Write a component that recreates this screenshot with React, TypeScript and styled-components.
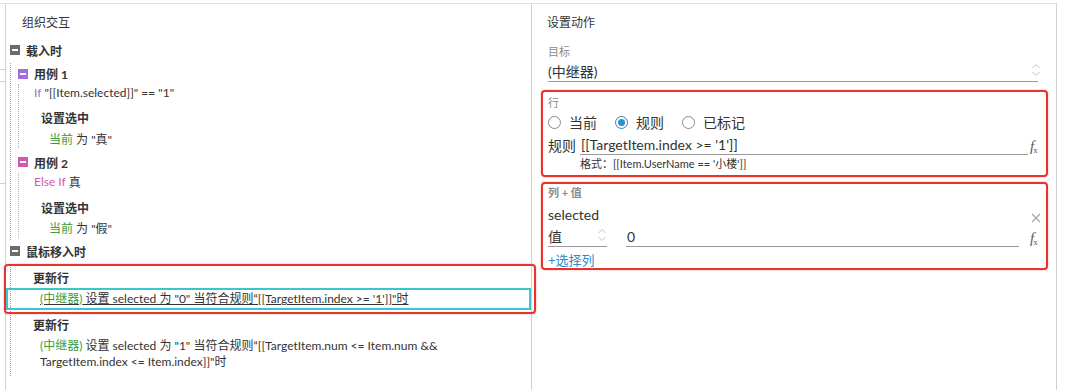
import React from "react";
import styled, { createGlobalStyle } from "styled-components";

const GlobalStyle = createGlobalStyle`
  html, body {
    margin: 0;
    padding: 0;
    background: #ffffff;
  }
  body {
    font-family: "Lato", "Noto Sans CJK SC", sans-serif;
    color: #333333;
    font-size: 12px;
  }
`;

const Page = styled.div`
  position: relative;
  width: 1066px;
  height: 390px;
  padding-top: 3px;
  box-sizing: border-box;
  overflow: hidden;
`;

const Frame = styled.div`
  display: flex;
  width: 1057px;
  height: 387px;
  border-top: 1px solid #e0e0e0;
  border-right: 1px solid #d2d2d2;
  box-sizing: border-box;
`;

const Gutter = styled.div`
  width: 5px;
  display: flex;
  flex-direction: column;
`;

const Tick = styled.div<{ $mt: number }>`
  height: 1px;
  background: #d0d0d0;
  margin-top: ${(p) => p.$mt}px;
`;

const Panel = styled.div<{ $width?: number }>`
  ${(p) => (p.$width ? `width: ${p.$width}px;` : "flex: 1;")}
  border-left: 1px solid #d2d2d2;
  display: flex;
  flex-direction: column;
  box-sizing: border-box;
`;

const PanelTitle = styled.div<{ $pl: number }>`
  height: 36px;
  line-height: 37px;
  padding-left: ${(p) => p.$pl}px;
  font-size: 12px;
  color: #333;
`;

/* ---------- left tree ---------- */

const EventGroup = styled.div<{ $mt?: number }>`
  margin-left: 4px;
  margin-top: ${(p) => p.$mt ?? 0}px;
`;

const NodeHeader = styled.div<{ $h: number; $mt?: number }>`
  display: flex;
  align-items: center;
  gap: 6px;
  height: ${(p) => p.$h}px;
  margin-top: ${(p) => p.$mt ?? 0}px;
  font-weight: 700;
  font-size: 12px;
  color: #333;
`;

const MinusBox = styled.span<{ $color: string }>`
  width: 10px;
  height: 10px;
  background: ${(p) => p.$color};
  display: inline-flex;
  align-items: center;
  justify-content: center;
  &::after {
    content: "";
    width: 6px;
    height: 2px;
    background: #ffffff;
  }
`;

const Branch = styled.div<{ $color: string; $pl: number; $pb?: number }>`
  border-left: 1px dotted ${(p) => p.$color};
  padding-left: ${(p) => p.$pl}px;
  padding-bottom: ${(p) => p.$pb ?? 0}px;
`;

const Line = styled.div<{ $h: number; $mt?: number; $indent?: number; $bold?: boolean }>`
  display: flex;
  align-items: center;
  height: ${(p) => p.$h}px;
  margin-top: ${(p) => p.$mt ?? 0}px;
  padding-left: ${(p) => p.$indent ?? 0}px;
  font-weight: ${(p) => (p.$bold ? 700 : 400)};
  white-space: pre;
`;

const Keyword = styled.span<{ $color: string }>`
  color: ${(p) => p.$color};
`;

const ActionRow = styled.div<{ $selected?: boolean; $mt?: number }>`
  margin-top: ${(p) => p.$mt ?? 0}px;
  margin-left: ${(p) => (p.$selected ? -5 : 0)}px;
  padding-left: ${(p) => (p.$selected ? 32 : 29)}px;
  border: ${(p) => (p.$selected ? "2px solid #3cc6c8" : "none")};
  height: ${(p) => (p.$selected ? "22px" : "auto")};
  box-sizing: border-box;
  display: flex;
  align-items: center;
  line-height: 16px;
  text-decoration: ${(p) => (p.$selected ? "underline" : "none")};
  white-space: nowrap;
`;

const ActionText = styled.div`
  line-height: 16px;
`;

const Highlight = styled.div`
  position: absolute;
  left: 4px;
  top: 264px;
  width: 532px;
  height: 50px;
  border: 2px solid #e8332c;
  border-radius: 4px;
  box-sizing: border-box;
  box-shadow: 0 0 2px rgba(232, 51, 44, 0.45);
  pointer-events: none;
`;

/* ---------- right form ---------- */

const Form = styled.div`
  padding: 0 15px 0 16px;
  display: flex;
  flex-direction: column;
`;

const SmallLabel = styled.div<{ $h: number; $mt?: number; $bold?: boolean }>`
  height: ${(p) => p.$h}px;
  margin-top: ${(p) => p.$mt ?? 0}px;
  display: flex;
  align-items: center;
  font-size: 11px;
  color: #8a8a8a;
  font-weight: ${(p) => (p.$bold ? 700 : 400)};
`;

const SelectField = styled.div<{ $width?: number; $mt?: number; $size?: number }>`
  display: flex;
  align-items: center;
  justify-content: space-between;
  height: 20px;
  margin-top: ${(p) => p.$mt ?? 0}px;
  ${(p) => (p.$width ? `width: ${p.$width}px;` : "")}
  border-bottom: 1px solid #9a9a9a;
  font-size: ${(p) => p.$size ?? 14}px;
  color: #333;
`;

const Section = styled.div<{ $mt: number }>`
  margin: ${(p) => p.$mt}px -7px 0 -7px;
  border: 2px solid #e8332c;
  border-radius: 4px;
  box-shadow: 0 0 2px rgba(232, 51, 44, 0.45);
  padding: 0 5px 0 5px;
  display: flex;
  flex-direction: column;
`;

const RadioRow = styled.div`
  display: flex;
  align-items: center;
  gap: 18px;
  height: 20px;
  margin-top: 1px;
`;

const RadioItem = styled.label`
  display: inline-flex;
  align-items: center;
  gap: 8px;
  font-size: 14px;
  color: #333;
`;

const RadioDot = styled.span<{ $checked?: boolean }>`
  width: 13px;
  height: 13px;
  border-radius: 50%;
  box-sizing: border-box;
  border: 1px solid ${(p) => (p.$checked ? "#2b86b8" : "#8a8a8a")};
  background: #fff;
  display: inline-flex;
  align-items: center;
  justify-content: center;
  &::after {
    content: "";
    width: 7px;
    height: 7px;
    border-radius: 50%;
    background: ${(p) => (p.$checked ? "#2595d2" : "transparent")};
  }
`;

const FieldRow = styled.div<{ $mt?: number; $h?: number }>`
  display: flex;
  align-items: center;
  height: ${(p) => p.$h ?? 20}px;
  margin-top: ${(p) => p.$mt ?? 0}px;
  font-size: 14px;
  color: #333;
`;

const FieldLabel = styled.span<{ $width: number }>`
  width: ${(p) => p.$width}px;
  flex: none;
`;

const TextInput = styled.div<{ $ml?: number }>`
  flex: 1;
  height: 20px;
  margin-left: ${(p) => p.$ml ?? 0}px;
  display: flex;
  align-items: center;
  padding-left: 1px;
  border-bottom: 1px solid #9a9a9a;
  font-size: 14px;
  color: #333;
  align-self: flex-start;
`;

const Fx = styled.span<{ $ml: number }>`
  margin-left: ${(p) => p.$ml}px;
  width: 11px;
  flex: none;
  font-family: "Liberation Serif", serif;
  font-style: italic;
  color: #5a5a5a;
  font-size: 15px;
  line-height: 1;
  margin-top: 5px;
  white-space: nowrap;
  sub {
    font-size: 9px;
    font-style: normal;
    vertical-align: -2px;
    margin-left: -1px;
  }
`;

const Hint = styled.div`
  height: 16px;
  padding-left: 32px;
  display: flex;
  align-items: center;
  font-size: 11px;
  color: #333;
`;

const SpreadRow = styled.div<{ $mt?: number }>`
  display: flex;
  justify-content: space-between;
  align-items: center;
  height: 20px;
  margin-top: ${(p) => p.$mt ?? 0}px;
  font-size: 14px;
  color: #333;
`;

const AddLink = styled.div`
  height: 17px;
  margin-top: 4px;
  display: flex;
  align-items: center;
  font-size: 13px;
  color: #2a8bcf;
`;

const Chevrons = ({ style }: { style?: React.CSSProperties }) => (
  <svg width="10" height="16" viewBox="0 0 10 16" style={style}>
    <polyline points="1.5,6 5,2.5 8.5,6" fill="none" stroke="#c4c4c4" strokeWidth="1" />
    <polyline points="1.5,10 5,13.5 8.5,10" fill="none" stroke="#c4c4c4" strokeWidth="1" />
  </svg>
);

const CloseIcon = () => (
  <svg width="10" height="10" viewBox="0 0 10 10" style={{ marginTop: 8 }}>
    <line x1="1" y1="1" x2="9" y2="9" stroke="#a8a8a8" strokeWidth="1.2" />
    <line x1="9" y1="1" x2="1" y2="9" stroke="#a8a8a8" strokeWidth="1.2" />
  </svg>
);

const GREEN = "#3d9a3d";
const PURPLE = "#a06ee0";
const PINK = "#d458ad";

export default function App() {
  return (
    <Page>
      <GlobalStyle />
      <Frame>
        <Gutter>
          <Tick $mt={65} />
          <Tick $mt={11} />
          <Tick $mt={101} />
        </Gutter>

        <Panel $width={526}>
          <PanelTitle $pl={16}>组织交互</PanelTitle>

          <EventGroup>
            <NodeHeader $h={20}>
              <MinusBox $color="#6b6b6b" />
              载入时
            </NodeHeader>
            <Branch $color="#9a9a9a" $pl={7} $pb={2}>
              <NodeHeader $h={21} $mt={3}>
                <MinusBox $color={PURPLE} />
                用例 1
              </NodeHeader>
              <Branch $color="#b9a2e0" $pl={15}>
                <Line $h={17}>
                  <Keyword $color={PURPLE}>If</Keyword> "[[Item.selected]]" == "1"
                </Line>
                <Line $h={20} $mt={6} $indent={7} $bold>
                  设置选中
                </Line>
                <Line $h={20} $mt={1} $indent={15}>
                  <Keyword $color={GREEN}>当前</Keyword> 为 "真"
                </Line>
              </Branch>
              <NodeHeader $h={22} $mt={3}>
                <MinusBox $color={PINK} />
                用例 2
              </NodeHeader>
              <Branch $color="#e2a0cf" $pl={15}>
                <Line $h={17}>
                  <Keyword $color={PINK}>Else If</Keyword> 真
                </Line>
                <Line $h={20} $mt={7} $indent={7} $bold>
                  设置选中
                </Line>
                <Line $h={21} $indent={15}>
                  <Keyword $color={GREEN}>当前</Keyword> 为 "假"
                </Line>
              </Branch>
            </Branch>
          </EventGroup>

          <EventGroup $mt={1}>
            <NodeHeader $h={20}>
              <MinusBox $color="#6b6b6b" />
              鼠标移入时
            </NodeHeader>
            <Branch $color="#9a9a9a" $pl={0} $pb={6}>
              <Line $h={20} $mt={6} $indent={22} $bold>
                更新行
              </Line>
              <ActionRow $selected $mt={1}>
                <Keyword $color={GREEN}>(中继器)</Keyword>&nbsp;设置 selected 为 "0" 当符合规则“[[TargetItem.index &gt;= '1']]"时
              </ActionRow>
              <Line $h={20} $mt={4} $indent={22} $bold>
                更新行
              </Line>
              <ActionRow $mt={4}>
                <ActionText>
                  <Keyword $color={GREEN}>(中继器)</Keyword> 设置 selected 为 "1" 当符合规则“[[TargetItem.num &lt;= Item.num &amp;&amp;
                  <br />
                  TargetItem.index &lt;= Item.index]]"时
                </ActionText>
              </ActionRow>
            </Branch>
          </EventGroup>
        </Panel>

        <Panel>
          <PanelTitle $pl={15}>设置动作</PanelTitle>
          <Form>
            <SmallLabel $h={18} $mt={2}>目标</SmallLabel>
            <SelectField $mt={1} $width={490} $size={14}>
              (中继器)
              <Chevrons style={{ marginRight: -3, marginTop: -2 }} />
            </SelectField>

            <Section $mt={8}>
              <SmallLabel $h={18} $mt={1}>行</SmallLabel>
              <RadioRow>
                <RadioItem>
                  <RadioDot />
                  当前
                </RadioItem>
                <RadioItem>
                  <RadioDot $checked />
                  规则
                </RadioItem>
                <RadioItem>
                  <RadioDot />
                  已标记
                </RadioItem>
              </RadioRow>
              <FieldRow $mt={2} $h={21}>
                <FieldLabel $width={32}>规则</FieldLabel>
                <TextInput>[[TargetItem.index &gt;= '1']]</TextInput>
                <Fx $ml={2}>
                  f<sub>x</sub>
                </Fx>
              </FieldRow>
              <Hint>格式：[[Item.UserName == '小楼']]</Hint>
              <div style={{ height: 4 }} />
            </Section>

            <Section $mt={5}>
              <SmallLabel $h={16} $bold>列 + 值</SmallLabel>
              <SpreadRow $mt={4}>
                selected
                <CloseIcon />
              </SpreadRow>
              <FieldRow $mt={2} $h={21}>
                <SelectField $width={59}>
                  值
                  <Chevrons style={{ marginTop: -2 }} />
                </SelectField>
                <TextInput $ml={19}>0</TextInput>
                <Fx $ml={11}>
                  f<sub>x</sub>
                </Fx>
              </FieldRow>
              <AddLink>+选择列</AddLink>
            </Section>
          </Form>
        </Panel>
      </Frame>
      <Highlight />
    </Page>
  );
}
